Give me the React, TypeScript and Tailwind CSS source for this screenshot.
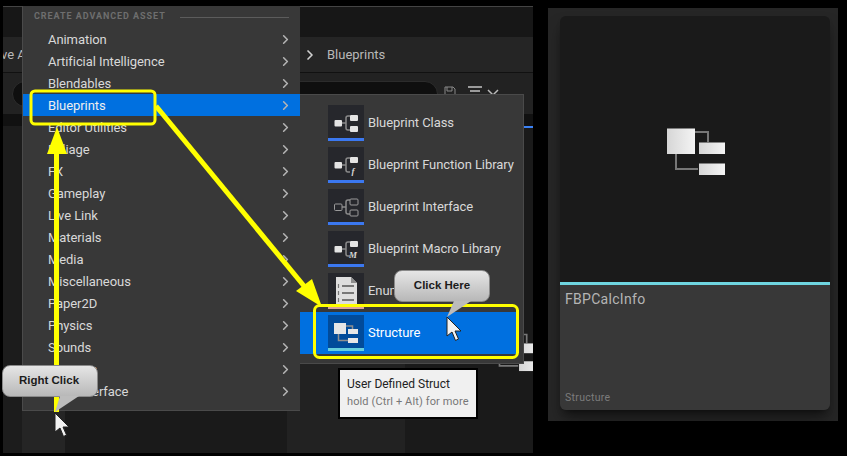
import React from 'react';
import { ChevronRight } from 'lucide-react';

const categories = [
  'Animation',
  'Artificial Intelligence',
  'Blendables',
  'Blueprints',
  'Editor Utilities',
  'Foliage',
  'FX',
  'Gameplay',
  'Live Link',
  'Materials',
  'Media',
  'Miscellaneous',
  'Paper2D',
  'Physics',
  'Sounds',
  'Textures',
  'User Interface',
];

function GraphIcon({ outline, badge }: { outline?: boolean; badge?: string }) {
  const fill = outline ? 'none' : '#e4e4e4';
  const stroke = outline ? '#9a9a9a' : 'none';
  return (
    <svg width="36" height="33" viewBox="0 0 36 33">
      <path d="M14 18h4M18 18v-5a2 2 0 0 1 2-2h2M18 18v5a2 2 0 0 0 2 2h2" fill="none" stroke="#8a8a8a" strokeWidth="1.5" />
      <rect x="6.5" y="15" width="7.5" height="6.5" rx="1" fill={fill} stroke={stroke} />
      <rect x="22" y="10" width="8" height="6" rx="1" fill={fill} stroke={stroke} />
      {badge ? (
        <text x="25" y="27" textAnchor="middle" fontSize="9" fontStyle="italic" fontWeight="700" fontFamily="Liberation Serif, serif" fill="#d8d8d8">
          {badge}
        </text>
      ) : (
        <rect x="22" y="21" width="8" height="6" rx="1" fill={fill} stroke={stroke} />
      )}
    </svg>
  );
}

function EnumIcon() {
  return (
    <svg width="36" height="33" viewBox="0 0 36 33">
      <path d="M8 4h15l6 6v23H8z" fill="#dedede" />
      <path d="M23 4l6 6h-6z" fill="#8d8d8d" />
      <path d="M14 13h12M14 20h12M14 27h12" stroke="#555" strokeWidth="1.5" />
      <path d="M10.5 11v4M10.5 18v4M10.5 25v4" stroke="#777" strokeWidth="1.2" />
    </svg>
  );
}

function StructIcon() {
  return (
    <svg width="36" height="33" viewBox="0 0 36 33">
      <path d="M18 11h6.5v3M10.5 19v6.5H20" fill="none" stroke="#8f8f8f" strokeWidth="1.5" />
      <rect x="6" y="8" width="12" height="11" fill="#e6e6e6" />
      <rect x="20" y="14" width="10" height="5" fill="#e6e6e6" />
      <rect x="20" y="23" width="10" height="5" fill="#e6e6e6" />
    </svg>
  );
}

function LargeStructIcon({ id, width, height }: { id: string; width: number; height: number }) {
  return (
    <svg width={width} height={height} viewBox="0 0 60 48">
      <defs>
        <linearGradient id={id}>
          <stop offset="0" stopColor="#d6d6d6" />
          <stop offset="1" stopColor="#f4f4f4" />
        </linearGradient>
      </defs>
      <path d="M28 4h14v10M10 26v15h22" fill="none" stroke="#777" strokeWidth="2" />
      <rect x="1" y="0.5" width="28" height="25.5" fill={`url(#${id})`} />
      <rect x="33" y="14.5" width="26" height="11.5" fill={`url(#${id})`} />
      <rect x="33" y="35.5" width="26" height="11.5" fill={`url(#${id})`} />
    </svg>
  );
}

function SubItem({ label, stripe, icon, active }: { label: string; stripe: string; icon: React.ReactNode; active?: boolean }) {
  return (
    <div className={`flex h-[42px] items-center pl-[28px] mr-[6px] ${active ? 'bg-[#0070e0] text-white' : 'text-[#d8d8d8]'}`}>
      <div className={`flex h-[36px] w-[36px] flex-col ${active ? 'bg-[#014b9a]' : 'bg-[#26272c]'}`}>
        <div className="h-[33px] overflow-hidden">{icon}</div>
        <div className={`h-[3px] ${stripe}`} />
      </div>
      <span className="ml-[4px] text-[13px] tracking-[-0.07px] whitespace-nowrap">{label}</span>
    </div>
  );
}

function Cursor({ className }: { className: string }) {
  return (
    <svg className={`absolute ${className}`} width="16" height="26" viewBox="0 0 16 26">
      <path d="M1 1l14 14h-6l3.5 8-3 1.5-3.5-8.5L1 20z" fill="#f2f2f2" stroke="#222" strokeWidth="1" />
    </svg>
  );
}

export default function App() {
  return (
    <div className="relative flex h-[456px] w-[847px] overflow-hidden bg-black font-['Roboto',sans-serif]">
      {/* editor behind the menus */}
      <div className="ml-[3px] mt-[6px] flex h-[447px] w-[530px] flex-col overflow-hidden border-t border-[#444]">
        <div className="h-[30px] bg-[#171717]" />
        <div className="flex h-[35px] items-center bg-[#252525] text-[13px] text-[#b8b8b8]">
          <span className="-ml-[2px] w-[21px] whitespace-nowrap">ve A</span>
          <ChevronRight className="ml-[280px]" size={16} strokeWidth={2.5} color="#d0d0d0" />
          <span className="ml-[9px]">Blueprints</span>
        </div>
        <div className="h-px bg-[#111]" />
        <div className="flex h-[41px] items-start bg-[#222] pl-[9px] pt-[8px]">
          <div className="h-[26px] w-[426px] rounded-[13px] border border-[#2c2c2c] bg-[#0f0f0f]" />
          <svg className="ml-[5px] mt-[5px]" width="60" height="14" viewBox="0 0 60 14">
            <path d="M2 1h8l2 2v9H2zM4 1v4h5V1" fill="none" stroke="#888" strokeWidth="1" />
            <path d="M25 1h14M27 5h10" stroke="#c4c4c4" strokeWidth="1.5" />
            <path d="M45 4l5 5 5-5" fill="none" stroke="#bbb" strokeWidth="1.5" />
          </svg>
        </div>
        <div className="h-[12px] bg-[#111]" />
        <div className="relative flex min-h-0 flex-1">
          <div className="w-[19px] bg-[#1c1c1c]" />
          <div className="w-[43px] bg-[#252525]" />
          <div className="w-[222px] bg-[#1a1a1a]" />
          <div className="w-[118px] bg-[#222]" />
          <div className="flex-1 bg-[#1a1a1a]">
            <div className="h-[2px] bg-[#3b82f6]" />
          </div>
          <div className="absolute left-[488px] top-[205px]">
            <LargeStructIcon id="behind" width={51} height={41} />
          </div>
        </div>
      </div>

      {/* asset card */}
      <div className="ml-[15px] mt-[8px] h-[413px] w-[290px] bg-[#262626] px-[12px] pt-[8px]">
        <div className="flex h-[394px] w-[270px] flex-col overflow-hidden rounded-[6px] shadow-lg shadow-black/50">
          <div className="flex h-[266px] items-center justify-center bg-[#1a1a1a] pl-[1px] pt-[6px]">
            <LargeStructIcon id="card" width={60} height={48} />
          </div>
          <div className="h-[3px] bg-[#6fd5e0]" />
          <div className="flex flex-1 flex-col justify-between bg-[#383838] px-[5px] pb-[4px] pt-[4px]">
            <span className="text-[14px] tracking-[0.3px] text-[#b5b5b5]">FBPCalcInfo</span>
            <span className="text-[10.5px] tracking-[0.3px] text-[#7c7c7c]">Structure</span>
          </div>
        </div>
      </div>

      {/* category menu */}
      <div className="absolute left-[22px] top-[6px] h-[405px] w-[278px] border-l border-b border-[#4a4a4a] bg-[#383838]">
        <div className="flex h-[22px] items-center px-[11px]">
          <span className="text-[9px] font-bold tracking-[0.95px] whitespace-nowrap text-[#6e6e6e]">CREATE ADVANCED ASSET</span>
          <div className="ml-[14px] h-px flex-1 bg-[#5c5c5c]" />
        </div>
        {categories.map((name) => (
          <div
            key={name}
            className={`flex h-[22px] items-center justify-between pl-[25px] pr-[7px] pt-px text-[13px] tracking-[-0.07px] ${name === 'Blueprints' ? 'bg-[#0070e0] text-[#eeeeee]' : 'text-[#d8d8d8]'}`}
          >
            <span>{name}</span>
            <ChevronRight size={15} strokeWidth={2.5} color="#b4b4b4" />
          </div>
        ))}
      </div>

      {/* blueprints submenu */}
      <div className="absolute left-[300px] top-[94px] h-[270px] w-[224px] border border-l-0 border-[#4a4a4a] bg-[#383838] pt-[7px]">
        <SubItem label="Blueprint Class" stripe="bg-[#3b78f0]" icon={<GraphIcon />} />
        <SubItem label="Blueprint Function Library" stripe="bg-[#3b78f0]" icon={<GraphIcon badge="f" />} />
        <SubItem label="Blueprint Interface" stripe="bg-[#3b78f0]" icon={<GraphIcon outline />} />
        <SubItem label="Blueprint Macro Library" stripe="bg-[#3b78f0]" icon={<GraphIcon badge="M" />} />
        <SubItem label="Enumeration" stripe="bg-[#d9a49c]" icon={<EnumIcon />} />
        <SubItem label="Structure" stripe="bg-[#66cfdc]" icon={<StructIcon />} active />
      </div>

      {/* hover tooltip */}
      <div className="absolute left-[338px] top-[368px] flex h-[51px] w-[140px] flex-col justify-center border-2 border-black bg-[#f0f0f0] pb-[2px] pl-[7px]">
        <span className="text-[12px] leading-[18px] text-[#222]">User Defined Struct</span>
        <span className="text-[11px] leading-[18px] tracking-[0.12px] text-[#777]">hold (Ctrl + Alt) for more</span>
      </div>

      {/* tutorial annotations */}
      <svg className="absolute left-0 top-0" width="847" height="456" viewBox="0 0 847 456">
        <path d="M56.5 412V150" stroke="#ffff00" strokeWidth="5" />
        <path d="M57 127l10 27H47z" fill="#ffff00" />
        <path d="M156 106l148 180" stroke="#ffff00" strokeWidth="5" />
        <path d="M322 307l-26-16 16-12z" fill="#ffff00" />
        <rect x="31" y="91" width="124" height="33" rx="4" fill="none" stroke="#ffff00" strokeWidth="3" />
        <rect x="314.5" y="305.5" width="203" height="52" rx="5" fill="none" stroke="#ffff00" strokeWidth="3" />
      </svg>

      <div className="absolute left-[2px] top-[365px] flex h-[32px] w-[96px] items-center justify-center rounded-[8px] border border-[#8a8a8a] bg-linear-to-b from-[#e6e6e6] to-[#b8b8b8] pb-[1px] pr-[2px] font-['Liberation_Sans',sans-serif] text-[11.5px] font-bold text-[#1c1c1c]">
        Right Click
      </div>
      <svg className="absolute left-[54px] top-[395px]" width="26" height="18" viewBox="0 0 26 18">
        <path d="M1 17L6 1h19z" fill="#bcbcbc" />
      </svg>

      <div className="absolute left-[394px] top-[270px] flex h-[32px] w-[96px] items-center justify-center rounded-[8px] border border-[#8a8a8a] bg-linear-to-b from-[#e6e6e6] to-[#b8b8b8] pb-[1px] font-['Liberation_Sans',sans-serif] text-[11.5px] font-bold text-[#1c1c1c]">
        Click Here
      </div>
      <svg className="absolute left-[446px] top-[300px]" width="26" height="18" viewBox="0 0 26 18">
        <path d="M1 17L8 1h17z" fill="#bcbcbc" />
      </svg>

      <Cursor className="left-[54px] top-[412px]" />
      <Cursor className="left-[446px] top-[316px]" />
    </div>
  );
}
